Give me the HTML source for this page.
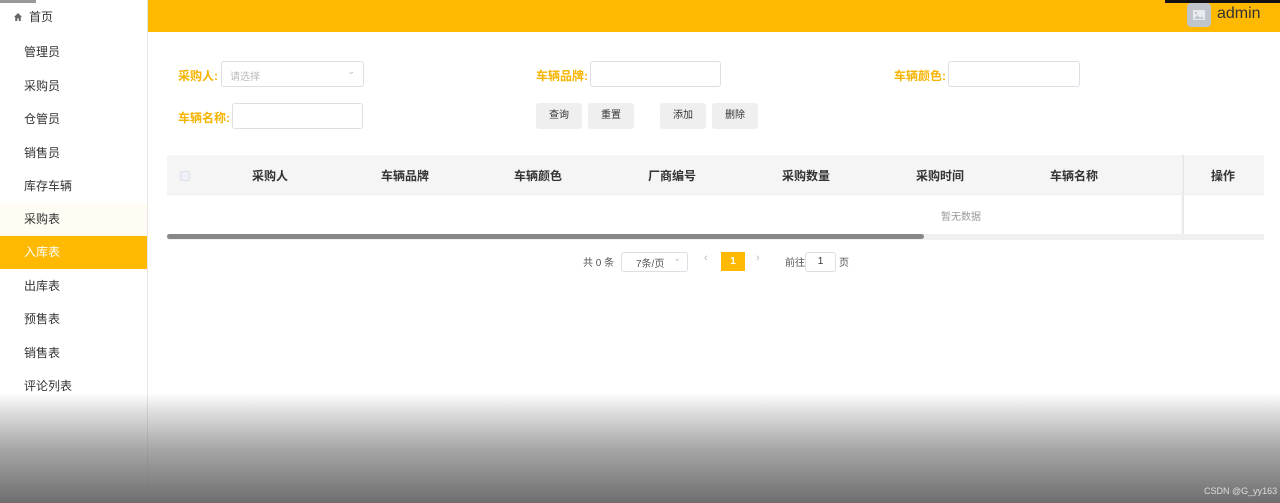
<!DOCTYPE html>
<html><head><meta charset="utf-8"><style>
*{margin:0;padding:0;box-sizing:border-box}
body{width:1280px;height:503px;position:relative;overflow:hidden;background:#fff;font-family:"Liberation Sans","Noto Sans CJK SC",sans-serif;color:#333}
.a{position:absolute}
.side{left:0;top:0;width:148px;height:503px;border-right:1px solid #e6e6e6;background:#fff}
.it{position:absolute;left:0;width:147px;height:33px;line-height:33px;padding-left:24px;font-size:12px;color:#333}
.lbl{font-size:12px;font-weight:bold;color:#f5b400}
.inp{border:1px solid #dcdfe6;border-radius:3px;height:26px;background:#fff}
.btn{top:103px;width:46px;height:26px;background:#efefef;border-radius:3px;font-size:10px;text-align:center;line-height:26px;color:#333}
.th{top:156px;font-size:12px;font-weight:bold;line-height:40px;transform:translateX(-50%)}
</style></head><body>
<div class="a side">
 <div class="a" style="left:0;top:0;width:36px;height:3px;background:#999"></div>
 <div class="it" style="top:1px;padding-left:13px"><svg width="10" height="10" viewBox="0 0 10 10" style="vertical-align:-1px;margin-right:6px"><path d="M5 1L1 5h1.2v4h2V6.5h1.6V9h2V5H9z" fill="#666"/></svg>首页</div>
 <div class="it" style="top:36px">管理员</div>
 <div class="it" style="top:70px">采购员</div>
 <div class="it" style="top:103px">仓管员</div>
 <div class="it" style="top:137px">销售员</div>
 <div class="it" style="top:170px">库存车辆</div>
 <div class="it" style="top:203px;background:#fffcf3">采购表</div>
 <div class="it" style="top:236px;background:#ffb900;color:#fff">入库表</div>
 <div class="it" style="top:270px">出库表</div>
 <div class="it" style="top:303px">预售表</div>
 <div class="it" style="top:337px">销售表</div>
 <div class="it" style="top:370px">评论列表</div>
</div>
<div class="a" style="left:148px;top:0;width:1132px;height:32px;background:#ffb900"></div>
<div class="a" style="left:1165px;top:0;width:115px;height:3px;background:#111"></div>
<div class="a" style="left:1187px;top:3px;width:24px;height:24px;background:#c0c4cc;border-radius:4px"><svg width="24" height="24" viewBox="0 0 24 24"><rect x="6" y="7" width="12" height="10" fill="#e8eaee"/><path d="M7 16l3.5-4 2.5 3 1.5-1.5L17 16z" fill="#c0c4cc"/><circle cx="9" cy="10" r="1.2" fill="#c0c4cc"/></svg></div>
<div class="a" style="left:1217px;top:5px;font-size:16px;color:#333">admin</div>

<div class="a lbl" style="left:178px;top:67px">采购人:</div>
<div class="a inp" style="left:221px;top:61px;width:143px"><span style="position:absolute;left:8px;top:6px;font-size:10px;color:#bbb">请选择</span><span style="position:absolute;right:8px;top:4px;font-size:9px;color:#bbb">&#8964;</span></div>
<div class="a lbl" style="left:536px;top:67px">车辆品牌:</div>
<div class="a inp" style="left:590px;top:61px;width:131px"></div>
<div class="a lbl" style="left:894px;top:67px">车辆颜色:</div>
<div class="a inp" style="left:948px;top:61px;width:132px"></div>
<div class="a lbl" style="left:178px;top:109px">车辆名称:</div>
<div class="a inp" style="left:232px;top:103px;width:131px"></div>
<div class="a btn" style="left:536px">查询</div>
<div class="a btn" style="left:588px">重置</div>
<div class="a btn" style="left:660px">添加</div>
<div class="a btn" style="left:712px">删除</div>

<div class="a" style="left:167px;top:155px;width:1097px;height:40px;background:#f5f5f5;border-bottom:1px solid #ebeef5"></div>
<div class="a" style="left:180px;top:171px;width:10px;height:10px;border:1px solid #dcdfe6;border-radius:2px;background:#eef1f8"></div>
<div class="a th" style="left:270px">采购人</div>
<div class="a th" style="left:405px">车辆品牌</div>
<div class="a th" style="left:538px">车辆颜色</div>
<div class="a th" style="left:672px">厂商编号</div>
<div class="a th" style="left:806px">采购数量</div>
<div class="a th" style="left:940px">采购时间</div>
<div class="a th" style="left:1074px">车辆名称</div>
<div class="a th" style="left:1223px">操作</div>
<div class="a" style="left:1181px;top:155px;width:3px;height:84px;background:linear-gradient(to right,#fafafa,#e2e2e2)"></div>
<div class="a" style="left:961px;top:208px;font-size:10px;color:#999;transform:translateX(-50%)">暂无数据</div>
<div class="a" style="left:167px;top:234px;width:1097px;height:6px;background:#f0f0f0"></div>
<div class="a" style="left:167px;top:234px;width:757px;height:5px;background:#888;border-radius:3px"></div>

<div class="a" style="left:583px;top:254px;font-size:10px;color:#555">共 0 条</div>
<div class="a inp" style="left:621px;top:252px;width:67px;height:20px;font-size:10px;color:#555"><span style="position:absolute;left:14px;top:2px">7条/页</span><span style="position:absolute;right:6px;top:0px;color:#bbb;font-size:9px">&#8964;</span></div>
<div class="a" style="left:704px;top:252px;font-size:11px;color:#bbb">&lsaquo;</div>
<div class="a" style="left:721px;top:252px;width:24px;height:19px;background:#ffb900;color:#fff;font-size:10px;font-weight:bold;text-align:center;line-height:19px">1</div>
<div class="a" style="left:756px;top:252px;font-size:11px;color:#bbb">&rsaquo;</div>
<div class="a" style="left:785px;top:254px;font-size:10px;color:#555">前往</div>
<div class="a inp" style="left:805px;top:252px;width:31px;height:20px;font-size:10px;text-align:center;line-height:18px">1</div>
<div class="a" style="left:839px;top:254px;font-size:10px;color:#555">页</div>

<div class="a" style="left:0;top:393px;width:1280px;height:110px;background:linear-gradient(to bottom,rgba(110,110,110,0),rgba(110,110,110,0.2) 15%,rgba(110,110,110,0.6) 50%,rgba(110,110,110,1) 100%)"></div>
<div class="a" style="left:1204px;top:486px;font-size:9px;color:#ddd">CSDN @G_yy163</div>
</body></html>
